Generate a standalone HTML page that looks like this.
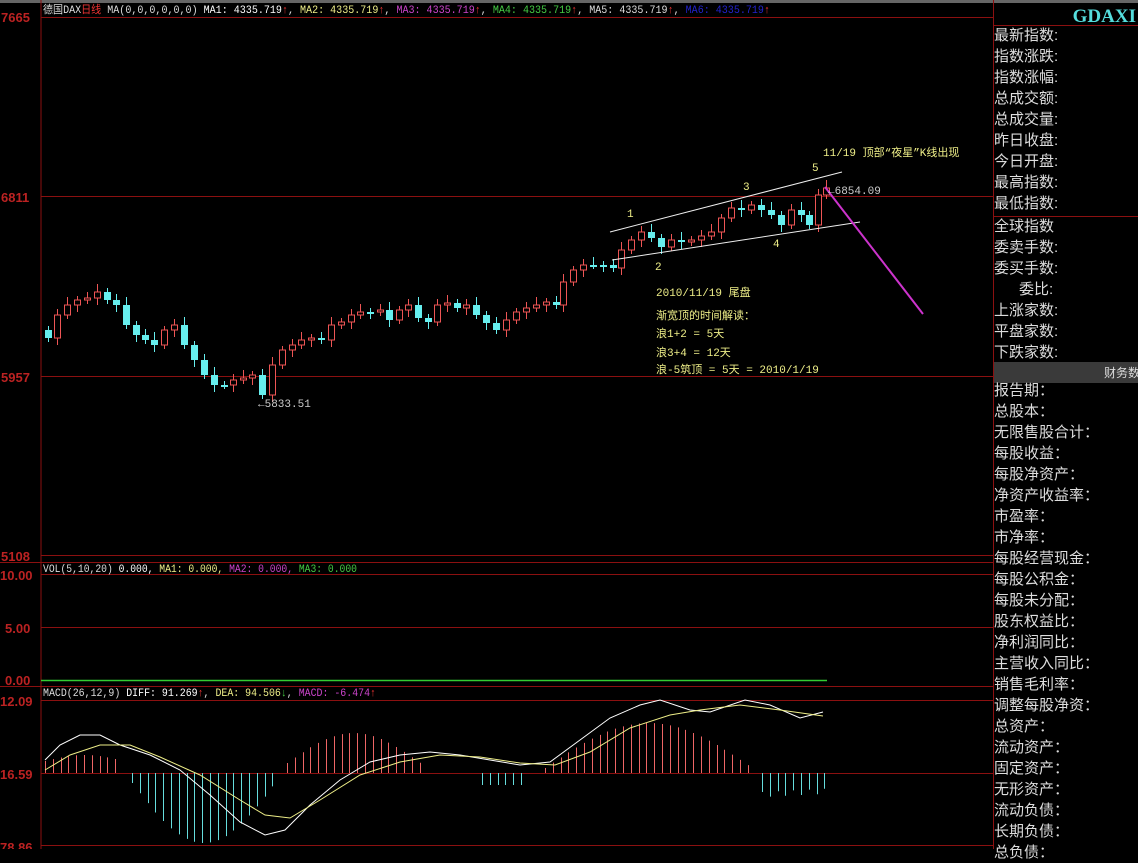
<!DOCTYPE html><html><head><meta charset="utf-8"><style>
body{margin:0;background:#000;width:1138px;height:849px;overflow:hidden;font-family:"Liberation Mono","WenQuanYi Zen Hei","Noto Sans CJK SC",monospace;}
svg{position:absolute;left:0;top:0}
.rp{position:absolute;left:994px;color:#ddd;font-size:15px;font-family:"Liberation Sans","WenQuanYi Zen Hei","Noto Sans CJK SC",sans-serif;line-height:21px;white-space:nowrap}
</style></head><body>
<svg id="s" width="1138" height="849" font-family="Liberation Mono, WenQuanYi Zen Hei, Noto Sans CJK SC, monospace" font-size="11">
<rect x="0" y="0" width="1138" height="3" fill="#666"/>
<g stroke="#8b1010" stroke-width="1">
<line x1="41" y1="0" x2="41" y2="849"/>
<line x1="993.5" y1="0" x2="993.5" y2="849"/>
<line x1="41" y1="17.5" x2="993" y2="17.5"/>
<line x1="41" y1="196.5" x2="993" y2="196.5"/>
<line x1="41" y1="376.5" x2="993" y2="376.5"/>
<line x1="41" y1="555.5" x2="993" y2="555.5"/>
<line x1="0" y1="562.5" x2="993" y2="562.5"/>
<line x1="41" y1="574.5" x2="993" y2="574.5"/>
<line x1="41" y1="627.5" x2="993" y2="627.5"/>
<line x1="0" y1="686.5" x2="993" y2="686.5"/>
<line x1="41" y1="700.5" x2="993" y2="700.5"/>
<line x1="41" y1="773.5" x2="993" y2="773.5"/>
<line x1="41" y1="845.5" x2="993" y2="845.5"/>
<line x1="994" y1="25.5" x2="1138" y2="25.5"/>
<line x1="994" y1="216.5" x2="1138" y2="216.5"/>
</g>
<line x1="41" y1="680.5" x2="827" y2="680.5" stroke="#3c3" stroke-width="1.5"/>
<g fill="#b22" font-weight="bold" font-size="13" font-family="Liberation Sans, sans-serif">
<text x="1" y="22">7665</text><text x="1" y="202">6811</text><text x="1" y="382">5957</text><text x="1" y="561">5108</text>
<text x="0" y="580">10.00</text><text x="5" y="633">5.00</text><text x="5" y="685">0.00</text>
<text x="0" y="706">12.09</text><text x="0" y="779">16.59</text><text x="0" y="852">78.86</text></g>
<text x="43" y="13" fill="#ddd" font-size="11" textLength="727" lengthAdjust="spacingAndGlyphs">德国DAX<tspan fill="#e33">日线</tspan> MA(0,0,0,0,0,0) <tspan fill="#fff">MA1: 4335.719</tspan><tspan fill="#e33">↑</tspan>, <tspan fill="#ee8">MA2: 4335.719</tspan><tspan fill="#e33">↑</tspan>, <tspan fill="#c4c">MA3: 4335.719</tspan><tspan fill="#e33">↑</tspan>, <tspan fill="#4c4">MA4: 4335.719</tspan><tspan fill="#e33">↑</tspan>, <tspan fill="#ddd">MA5: 4335.719</tspan><tspan fill="#e33">↑</tspan>, <tspan fill="#22c">MA6: 4335.719</tspan><tspan fill="#e33">↑</tspan></text>
<text x="43" y="572" fill="#ddd" textLength="314" lengthAdjust="spacingAndGlyphs">VOL(5,10,20) <tspan fill="#fff">0.000,</tspan> <tspan fill="#ee8">MA1: 0.000,</tspan> <tspan fill="#c4c">MA2: 0.000,</tspan> <tspan fill="#4c4">MA3: 0.000</tspan></text>
<text x="43" y="696" fill="#ddd" textLength="333" lengthAdjust="spacingAndGlyphs">MACD(26,12,9) <tspan fill="#fff">DIFF: 91.269</tspan><tspan fill="#e33">↑</tspan>, <tspan fill="#ee8">DEA: 94.506</tspan><tspan fill="#4c4">↓</tspan>, <tspan fill="#c4c">MACD: -6.474</tspan><tspan fill="#e33">↑</tspan></text>
<g id="c"></g>
<g stroke="#eee" stroke-width="1"><line x1="610" y1="232" x2="842" y2="172"/><line x1="612" y1="260" x2="860" y2="222"/></g>
<line x1="825" y1="187" x2="923" y2="314" stroke="#c3c" stroke-width="2"/>
<g fill="#ee8" font-size="11">
<text x="627" y="217">1</text><text x="655" y="270">2</text><text x="743" y="190">3</text><text x="773" y="247">4</text><text x="812" y="171">5</text>
<text x="823" y="156">11/19 顶部“夜星”K线出现</text>
<text x="656" y="296">2010/11/19 尾盘</text>
<text x="656" y="319">渐宽顶的时间解读：</text>
<text x="656" y="337">浪1+2 = 5天</text>
<text x="656" y="356">浪3+4 = 12天</text>
<text x="656" y="373">浪-5筑顶 = 5天 = 2010/1/19</text></g>
<text x="828" y="194" fill="#ccc">←6854.09</text>
<text x="258" y="407" fill="#ccc">←5833.51</text>
<g id="m"></g>
<rect x="994" y="362" width="144" height="21" fill="#3a3a3a"/>
<text x="1104" y="377" fill="#ddd" font-size="12" font-family="WenQuanYi Zen Hei, sans-serif">财务数</text>
<text x="1136" y="22" fill="#5dd" font-size="19" font-weight="bold" text-anchor="end" font-family="Liberation Serif, serif">GDAXI</text>
</svg>
<div class="rp" style="top:25px">最新指数:<br>指数涨跌:<br>指数涨幅:<br>总成交额:<br>总成交量:<br>昨日收盘:<br>今日开盘:<br>最高指数:<br>最低指数:</div>
<div class="rp" style="top:216px">全球指数<br>委卖手数:<br>委买手数:<br>&nbsp;&nbsp;&nbsp;&nbsp;&nbsp;&nbsp;委比:<br>上涨家数:<br>平盘家数:<br>下跌家数:</div>
<div class="rp" style="top:380px">报告期：<br>总股本：<br>无限售股合计：<br>每股收益：<br>每股净资产：<br>净资产收益率：<br>市盈率：<br>市净率：<br>每股经营现金：<br>每股公积金：<br>每股未分配：<br>股东权益比：<br>净利润同比：<br>主营收入同比：<br>销售毛利率：<br>调整每股净资：<br>总资产：<br>流动资产：<br>固定资产：<br>无形资产：<br>流动负债：<br>长期负债：<br>总负债：</div>
<script>
var P=[[45,338],[54,315],[64,305],[74,300],[84,298],[94,292],[104,300],[113,305],[123,325],[133,335],[142,340],[151,345],[161,330],[171,325],[181,345],[191,360],[201,375],[211,385],[221,385],[230,380],[240,378],[249,375],[259,395],[269,365],[279,350],[289,345],[298,340],[308,338],[318,340],[328,325],[338,322],[348,315],[357,312],[367,312],[377,310],[386,320],[396,310],[405,305],[415,318],[425,322],[434,305],[444,303],[454,308],[463,305],[473,315],[483,323],[493,330],[503,320],[513,312],[523,308],[533,305],[543,302],[553,305],[560,282],[570,270],[580,265],[590,265],[600,265],[610,268],[618,250],[628,240],[638,232],[648,238],[658,247],[668,240],[678,242],[688,240],[698,236],[708,232],[718,218],[728,208],[738,210],[748,205],[758,210],[768,215],[778,225],[788,210],[798,215],[806,225],[815,195],[823,188]];
var h='',prev=330;
P.forEach(function(p,i){var x=p[0],c=p[1],o=prev;var up=c<o;var t=Math.min(o,c)-4-(i%3)*2,b=Math.max(o,c)+4+(i%2)*3;var top=Math.min(o,c),ht=Math.max(Math.abs(o-c),2);
if(up){h+='<line x1="'+(x+3.5)+'" y1="'+t+'" x2="'+(x+3.5)+'" y2="'+b+'" stroke="#e55"/><rect x="'+x+'.5" y="'+top+'" width="6" height="'+ht+'" fill="#000" stroke="#e55"/>';}
else{h+='<line x1="'+(x+3.5)+'" y1="'+t+'" x2="'+(x+3.5)+'" y2="'+b+'" stroke="#6ee"/><rect x="'+x+'" y="'+top+'" width="7" height="'+ht+'" fill="#6ee"/>';}
prev=c;});
document.getElementById('c').innerHTML=h;
var m='';function bar(x,v){var c=v<0?'#e66':'#6dd';m+='<line x1="'+x+'.5" y1="773" x2="'+x+'.5" y2="'+(773+v)+'" stroke="'+c+'"/>';}
for(var x=45;x<120;x+=7.8){bar(Math.round(x),-12-Math.sin((x-45)/25)*6);}
for(var x=132;x<275;x+=7.8){bar(Math.round(x),10+Math.sin((x-132)/143*Math.PI)*60);}
for(var x=287;x<420;x+=7.8){bar(Math.round(x),-10-Math.sin((x-287)/133*Math.PI)*30);}
for(var x=482;x<525;x+=7.8){bar(Math.round(x),12);}
for(var x=545;x<752;x+=7.8){bar(Math.round(x),-5-Math.sin((x-545)/207*Math.PI)*45);}
for(var x=762;x<825;x+=7.8){bar(Math.round(x),15+((x*7)%10));}
function pl(pts,c){m+='<polyline fill="none" stroke="'+c+'" points="'+pts+'"/>';}
pl('45,760 60,745 80,735 100,735 120,745 150,755 180,770 210,795 240,822 265,835 285,830 310,805 340,780 370,762 400,755 430,752 460,755 490,760 520,765 550,762 580,740 610,718 640,705 660,700 690,710 710,712 745,700 770,705 800,718 823,712','#fff');
pl('45,770 70,755 100,745 130,745 160,757 200,775 240,800 265,815 290,818 320,800 360,775 400,762 440,755 480,757 520,763 555,765 590,752 630,728 670,715 700,710 740,705 780,710 823,716','#ee8');
document.getElementById('m').innerHTML=m;
</script>
</body></html>
